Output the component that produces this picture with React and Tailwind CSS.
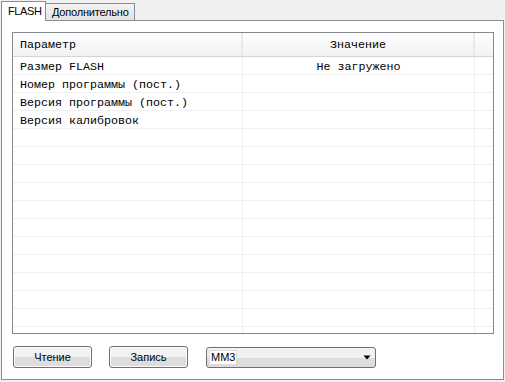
const rows = [
  { name: 'Размер FLASH', value: 'Не загружено' },
  { name: 'Номер программы (пост.)', value: '' },
  { name: 'Версия программы (пост.)', value: '' },
  { name: 'Версия калибровок', value: '' },
];

// пустые строки до конца таблицы
const allRows = [...rows, ...Array.from({ length: 12 }, () => ({ name: '', value: '' }))];

function WinButton({ children }) {
  return (
    <button
      type="button"
      className="w-[79px] h-[22px] rounded-[3px] border border-[#707070] bg-gradient-to-b from-[#f2f2f2] from-50% to-[#dddddd] to-50% text-[11px] text-black font-['Liberation_Sans',sans-serif] shadow-[inset_0_0_0_1px_#fcfcfc]"
    >
      {children}
    </button>
  );
}

export default function App() {
  return (
    <div className="w-[505px] h-[382px] bg-[#f0f0f0] font-['Liberation_Sans',sans-serif] text-black overflow-hidden">
      {/* вкладки */}
      <div className="flex items-end h-[20px] pl-[1px] pt-[1px]">
        <div className="relative z-10 h-[20px] -mb-px w-[45px] border border-b-0 border-[#898c95] bg-white flex items-center pl-[6px] text-[11px] tracking-[-0.4px]">
          FLASH
        </div>
        <div className="h-[17px] w-[89px] border border-l-0 border-b-0 border-[#898c95] bg-gradient-to-b from-[#f3f3f3] to-[#e3e3e3] flex items-center pl-[6px] text-[11px] tracking-[-0.2px]">
          Дополнительно
        </div>
      </div>

      {/* панель */}
      <div className="ml-[1px] w-[503px] h-[360px] border border-[#898c95] bg-white pt-[11px] pl-[10px]">
        <div className="w-[482px] h-[302px] border border-[#828790] bg-white overflow-hidden font-['Liberation_Mono',monospace] text-[11.67px]">
          <div className="flex h-[24px] border-b border-[#d5d5d5] bg-gradient-to-b from-white to-[#f1f2f4]">
            <div className="w-[230px] border-r-2 border-[#e8e8e8] flex items-center pl-[7px] pt-[3px]">Параметр</div>
            <div className="w-[232px] border-r-2 border-[#e8e8e8] flex items-center justify-center pt-[3px]">Значение</div>
            <div className="flex-1" />
          </div>
          {allRows.map((r, i) => (
            <div key={i} className="flex h-[18px] border-b border-[#f0f0f0]">
              <div className="w-[230px] border-r border-[#f0f0f0] flex items-center pl-[7px] pt-[4px] whitespace-pre">{r.name}</div>
              <div className="w-[232px] border-r border-[#f0f0f0] flex items-center justify-center pt-[4px] whitespace-pre">{r.value}</div>
              <div className="flex-1" />
            </div>
          ))}
        </div>

        <div className="flex items-center mt-[12px] ml-[1px] gap-[17px]">
          <WinButton>Чтение</WinButton>
          <WinButton>Запись</WinButton>
          <div className="ml-[1px] w-[170px] h-[21px] rounded-[3px] border border-[#707070] bg-gradient-to-b from-[#f2f2f2] from-50% to-[#dddddd] to-50% flex items-center justify-between pl-[3px] pr-[4px] text-[11px]">
            <span className="bg-white border border-[#dadada] px-[1px] leading-[13px] -ml-[1px]">MM3</span>
            <svg width="8" height="5" viewBox="0 0 8 5">
              <path d="M0.5 0.5 H7.5 L4 4.5 Z" fill="#000" />
            </svg>
          </div>
        </div>
      </div>
    </div>
  );
}
